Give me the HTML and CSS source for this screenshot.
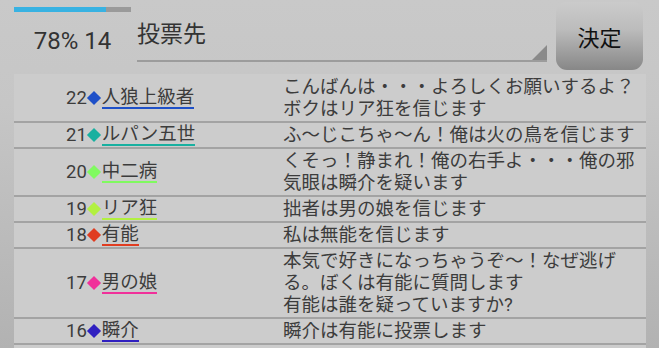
FILE: index.html
```html
<!DOCTYPE html>
<html lang="ja">
<head>
    <meta charset="UTF-8">
    <meta name="viewport" content="width=device-width, initial-scale=1.0">
    <title>投票</title>
    <link rel="stylesheet" href="styles.css">
</head>
<body>
<div class="screen">
    <div class="topbar">
        <div class="status">
            <div class="progress"><div class="progress-fill"></div></div>
            <div class="status-text">78% 14</div>
        </div>
        <div class="spinner">
            <span class="spinner-label">投票先</span>
            <span class="spinner-arrow"></span>
        </div>
        <button class="decide">決定</button>
    </div>

    <div class="log">
        <div class="row">
            <div class="who"><span class="no">22</span><span class="mark blue"></span><span class="name blue">人狼上級者</span></div>
            <div class="msg">こんばんは・・・よろしくお願いするよ？ボクはリア狂を信じます</div>
        </div>
        <div class="row">
            <div class="who"><span class="no">21</span><span class="mark teal"></span><span class="name teal">ルパン五世</span></div>
            <div class="msg">ふ〜じこちゃ〜ん！俺は火の鳥を信じます</div>
        </div>
        <div class="row">
            <div class="who"><span class="no">20</span><span class="mark green"></span><span class="name green">中二病</span></div>
            <div class="msg">くそっ！静まれ！俺の右手よ・・・俺の邪気眼は瞬介を疑います</div>
        </div>
        <div class="row">
            <div class="who"><span class="no">19</span><span class="mark lime"></span><span class="name lime">リア狂</span></div>
            <div class="msg">拙者は男の娘を信じます</div>
        </div>
        <div class="row">
            <div class="who"><span class="no">18</span><span class="mark red"></span><span class="name red">有能</span></div>
            <div class="msg">私は無能を信じます</div>
        </div>
        <div class="row">
            <div class="who"><span class="no">17</span><span class="mark pink"></span><span class="name pink">男の娘</span></div>
            <div class="msg">本気で好きになっちゃうぞ〜！なぜ逃げる。ぼくは有能に質問します<br>有能は誰を疑っていますか?</div>
        </div>
        <div class="row">
            <div class="who"><span class="no">16</span><span class="mark indigo"></span><span class="name indigo">瞬介</span></div>
            <div class="msg">瞬介は有能に投票します</div>
        </div>
    </div>
</div>
</body>
</html>
```

FILE: styles.css
```css
html, body {
    margin: 0;
    padding: 0;
    height: 100%;
    overflow: hidden;
}
body {
    font-family: Roboto, "Noto Sans CJK JP", sans-serif;
    background: linear-gradient(#c9c9c9, #c6c6c6 30%, #b2b2b2);
    color: #3c3c3c;
}
.screen {
    padding: 0 13px 0 14px;
}

/* header */
.topbar {
    display: flex;
    align-items: flex-start;
    height: 74px;
}
.status {
    width: 117px;
    padding-top: 7px;
}
.progress {
    height: 5px;
    background: #9a9a9a;
}
.progress-fill {
    width: 79%;
    height: 100%;
    background: #38b2e2;
}
.status-text {
    margin-top: 15px;
    text-align: center;
    font-size: 24px;
    color: #333;
}
.spinner {
    position: relative;
    margin-left: 6px;
    margin-top: 4px;
    width: 410px;
    height: 56px;
    border-bottom: 2px solid #9c9c9c;
}
.spinner-label {
    display: block;
    padding-top: 16px;
    font-size: 23px;
    color: #333;
    line-height: 30px;
}
.spinner-arrow {
    position: absolute;
    right: 0;
    bottom: 0;
    width: 0;
    height: 0;
    border-left: 15px solid transparent;
    border-bottom: 15px solid #8a8a8a;
}
.decide {
    margin-left: 9px;
    margin-top: 2px;
    width: 87px;
    height: 68px;
    border: none;
    border-radius: 11px;
    background: linear-gradient(#cbcbcb, #bcbcbc 40%, #878787);
    font-family: "Noto Sans CJK JP", sans-serif;
    font-size: 22px;
    color: #111;
    padding: 0;
}

/* log list */
.log {
    background: #cccccc;
    padding-bottom: 30px;
}
.row {
    display: flex;
    border-bottom: 2px solid #a3a3a3;
    padding: 1px 0;
}
.row:first-child {
    padding-top: 2px;
}
.who {
    width: 217px;
    padding-left: 52px;
    display: flex;
    align-items: center;
    font-size: 18.5px;
}
.no {
    line-height: 20px;
}
.mark {
    display: inline-block;
    width: 10px;
    height: 10px;
    margin: 0 3px 0 2px;
    transform: rotate(45deg);
}
.name {
    line-height: 20px;
    border-bottom: 2px solid;
}
.msg {
    width: 362px;
    font-size: 18.5px;
    line-height: 22px;
}

.mark.blue { background: #1e50c8; }
.name.blue { border-color: #1e50c8; }
.mark.teal { background: #18b0a0; }
.name.teal { border-color: #18b0a0; }
.mark.green { background: #80fa60; }
.name.green { border-color: #80fa60; }
.mark.lime { background: #b2f040; }
.name.lime { border-color: #b2f040; }
.mark.red { background: #e03c20; }
.name.red { border-color: #e03c20; }
.mark.pink { background: #f0309a; }
.name.pink { border-color: #f0309a; }
.mark.indigo { background: #3020c0; }
.name.indigo { border-color: #3020c0; }
```
